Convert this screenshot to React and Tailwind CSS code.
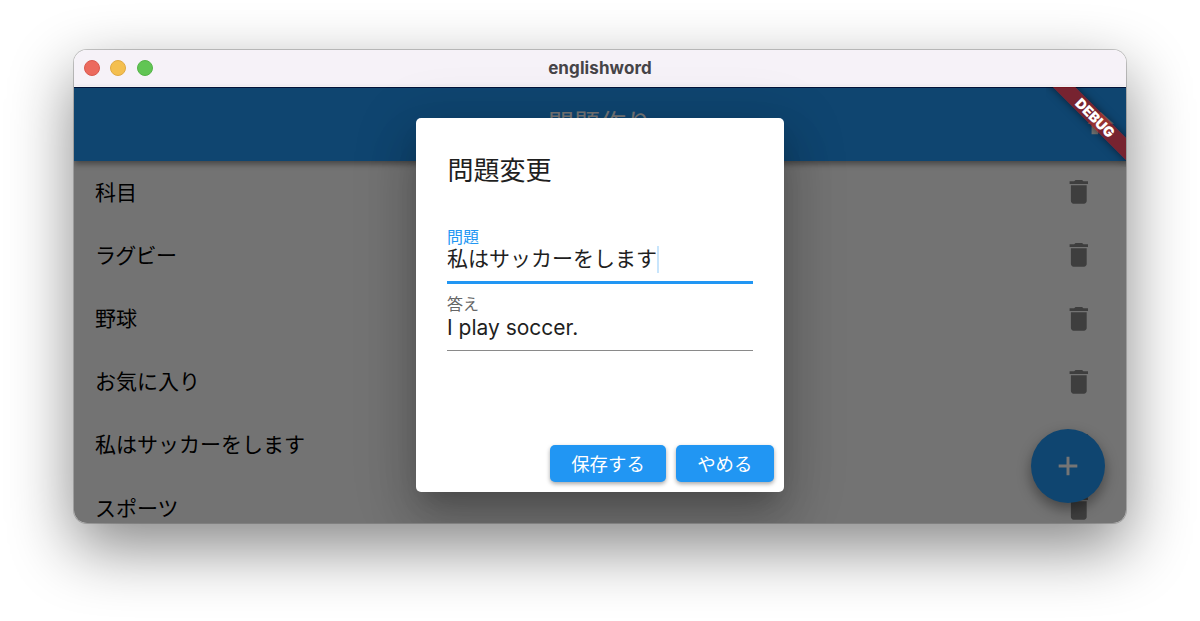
function Trash() {
  return (
    <svg viewBox="0 0 24 24" className="h-[31.6px] w-[31.6px] shrink-0" fill="#878787">
      <path d="M6 19c0 1.1.9 2 2 2h8c1.1 0 2-.9 2-2V7H6v12zM19 4h-3.5l-1-1h-5l-1 1H5v2h14V4z" />
    </svg>
  );
}

const rows = [
  { text: "科目", tracking: "" },
  { text: "ラグビー", tracking: "tracking-[-0.7px]" },
  { text: "野球", tracking: "" },
  { text: "お気に入り", tracking: "" },
  { text: "私はサッカーをします", tracking: "" },
  { text: "スポーツ", tracking: "" },
];

export default function App() {
  return (
    <div className="h-[621px] w-full overflow-hidden bg-white px-[74px] pt-[50px] font-['Noto_Sans_CJK_JP',sans-serif]">
      <div className="h-[473px] w-[1052px] rounded-[13px] shadow-[0_0_0_1px_rgba(0,0,0,0.2),0_24px_64px_rgba(0,0,0,0.48)]">
        <div className="relative flex h-full flex-col overflow-hidden rounded-[13px] bg-[#fafafa]">
          <div className="relative flex h-[37px] shrink-0 items-center justify-center border-b border-white bg-[#f6f2f8]">
            <div className="absolute left-[10px] flex gap-[10.4px]">
              <span className="h-4 w-4 rounded-full border border-[#d9594f] bg-[#ec6a5e]" />
              <span className="h-4 w-4 rounded-full border border-[#dfa944] bg-[#f4bf4f]" />
              <span className="h-4 w-4 rounded-full border border-[#55b348] bg-[#61c554]" />
            </div>
            <span className="font-[Inter,sans-serif] text-[17px] font-bold leading-5 tracking-[0.1px] text-[#464448]">englishword</span>
          </div>
          <div className="relative flex min-h-0 flex-1 flex-col">
            <header className="relative z-10 flex h-[73.5px] shrink-0 items-start justify-center border-t border-[#062b80] bg-[#2196f3] shadow-[0_3px_6px_rgba(0,0,0,0.4)]">
              <span className="mt-[15px] text-[26px] leading-[38px] text-white">問題作り</span>
              <svg viewBox="0 0 24 24" className="absolute right-[9.5px] top-[20px] h-[31.6px] w-[31.6px]" fill="white">
                <path d="M10 20v-6h4v6h5v-8h3L12 3 2 12h3v8z" />
              </svg>
            </header>
            <main className="flex flex-col">
              {rows.map((row) => (
                <div key={row.text} className="flex h-[63.2px] shrink-0 items-center justify-between pl-[21px] pr-[31px]">
                  <span className={"pb-[3px] text-[21px] leading-8 text-black " + row.tracking}>{row.text}</span>
                  <Trash />
                </div>
              ))}
            </main>
            <div className="absolute right-[21px] top-[342px] flex h-[74px] w-[74px] items-center justify-center rounded-full bg-[#2196f3] shadow-[0_6px_14px_rgba(0,0,0,0.4)]">
              <svg viewBox="0 0 24 24" className="h-8 w-8" fill="white">
                <path d="M19 13.1h-5.9V19h-2.2v-5.9H5v-2.2h5.9V5h2.2v5.9H19z" />
              </svg>
            </div>
            <div className="absolute inset-0 z-20 flex items-start justify-center bg-black/54 pt-[31.4px]">
              <section className="flex h-[373.6px] w-[368px] flex-col rounded-[5px] bg-white shadow-[0_14px_24px_-9px_rgba(0,0,0,0.2),0_30px_48px_4px_rgba(0,0,0,0.14),0_12px_60px_10px_rgba(0,0,0,0.12)]">
                <div className="flex flex-1 flex-col px-[31px]">
                  <h1 className="mt-[31px] pl-[0.5px] text-[26px] leading-[40px] text-[#1f1f1f]">問題変更</h1>
                  <div className="mt-[38px] flex h-[57px] flex-col border-b-[3px] border-[#2196f3]">
                    <label className="text-[16px] leading-[18px] text-[#2196f3]">問題</label>
                    <div className="flex items-start">
                      <span className="text-[21px] leading-[24px] text-[#1f1f1f]">私はサッカーをします</span>
                      <span className="mt-[1px] h-[27px] w-[2px] bg-[#c8e5fc]" />
                    </div>
                  </div>
                  <div className="mt-[10px] flex h-[57px] flex-col border-b border-[#8a8a8a]">
                    <label className="text-[16px] leading-[18px] text-[#666666]">答え</label>
                    <span className="mt-[1.5px] font-[Inter,sans-serif] text-[21px] leading-[27px] text-[#1f1f1f]">I play soccer.</span>
                  </div>
                </div>
                <div className="flex justify-end gap-[10px] pb-[10px] pr-[10.5px]">
                  <button className="h-[37px] w-[116px] rounded-[5px] bg-[#2196f3] text-[18.4px] leading-[36px] text-white shadow-[0_2px_4px_rgba(0,0,0,0.35)]">保存する</button>
                  <button className="h-[37px] w-[97.5px] rounded-[5px] bg-[#2196f3] text-[18.4px] leading-[36px] text-white shadow-[0_2px_4px_rgba(0,0,0,0.35)]">やめる</button>
                </div>
              </section>
            </div>
            <div className="absolute right-0 top-0 z-30 h-[80px] w-[80px] overflow-hidden">
              <div className="absolute left-[-26px] top-[22.5px] flex h-[16px] w-[150px] rotate-45 items-center justify-center bg-[#a41616]/70 font-[Inter,sans-serif] text-[14px] font-black leading-4 text-white shadow-[0_0_8px_rgba(0,0,0,0.5)]">DEBUG</div>
            </div>
          </div>
        </div>
      </div>
    </div>
  );
}
